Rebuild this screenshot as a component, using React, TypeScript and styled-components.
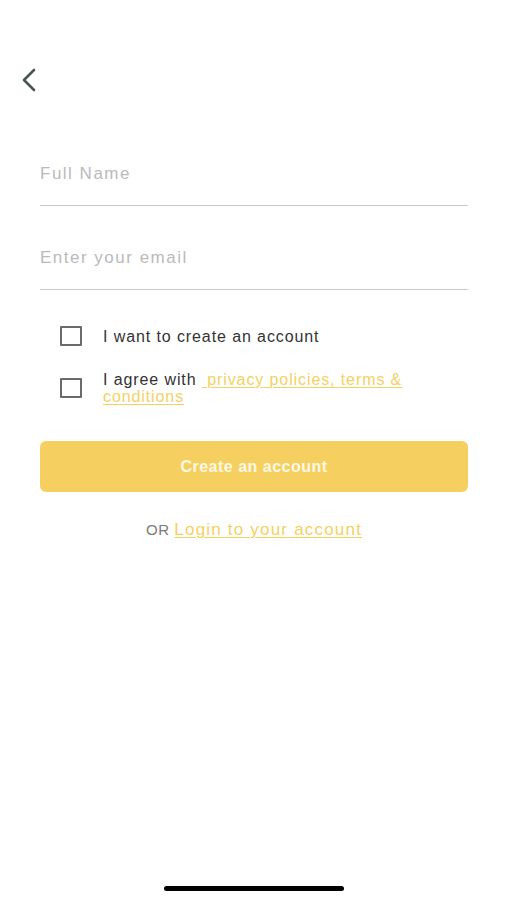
import React from 'react'
import styled, { createGlobalStyle } from 'styled-components'

const GlobalStyle = createGlobalStyle`
  html, body {
    margin: 0;
    padding: 0;
    background: #ffffff;
  }
  body {
    font-family: 'Liberation Sans', Arial, sans-serif;
  }
`

const App = () => {
  return (
    <Screen>
      <GlobalStyle />
      <TopBar>
        <BackButton aria-label="Back">
          <svg width="18" height="24" viewBox="0 0 18 24" fill="none">
            <path d="M14 2 L4 12 L14 22" stroke="#4a5457" strokeWidth="2.6" strokeLinecap="round" strokeLinejoin="round" />
          </svg>
        </BackButton>
      </TopBar>

      <Form>
        <Field>
          <Input placeholder="Full Name" />
        </Field>
        <Field>
          <Input placeholder="Enter your email" />
        </Field>

        <Checks>
          <CheckRow>
            <Box />
            <CheckLabel>I want to create an account</CheckLabel>
          </CheckRow>
          <CheckRow>
            <Box />
            <CheckLabel>
              I agree with <Link>&nbsp;privacy policies, terms &amp; conditions</Link>
            </CheckLabel>
          </CheckRow>
        </Checks>

        <PrimaryButton>Create an account</PrimaryButton>

        <OrLine>
          OR <Link $size={17}>Login to your account</Link>
        </OrLine>
      </Form>

      <Spacer />
      <HomeBar />
    </Screen>
  )
}

export default App

const Screen = styled.div`
  width: 507px;
  height: 900px;
  display: flex;
  flex-direction: column;
  background: #fff;
  overflow: hidden;
`

const TopBar = styled.div`
  height: 130px;
  padding: 68px 0 0 20px;
  box-sizing: border-box;
`

const BackButton = styled.div`
  width: 18px;
  height: 24px;
`

const Form = styled.div`
  padding: 0 39px 0 40px;
  display: flex;
  flex-direction: column;
`

const Field = styled.div`
  height: 75px;
  border-bottom: 1.5px solid #c9c9c9;
  display: flex;
  align-items: center;
  margin-bottom: 8px;
`

const Input = styled.input`
  border: none;
  outline: none;
  width: 100%;
  padding: 0;
  margin-top: 12px;
  font-family: 'Liberation Sans', Arial, sans-serif;
  font-size: 17px;
  letter-spacing: 1.5px;
  color: #333;
  background: transparent;
  &::placeholder {
    color: #bababa;
  }
`

const Checks = styled.div`
  display: flex;
  flex-direction: column;
  gap: 25px;
  padding: 28px 0 0 20px;
`

const CheckRow = styled.div`
  display: flex;
  align-items: center;
  gap: 21px;
`

const Box = styled.div`
  width: 18px;
  height: 16px;
  border: 2px solid #6a6a6a;
  border-radius: 1px;
  flex-shrink: 0;
`

const CheckLabel = styled.div`
  font-size: 16px;
  line-height: 17px;
  letter-spacing: 0.9px;
  color: #333;
  max-width: 320px;
`

const Link = styled.span<{ $size?: number }>`
  color: #f3d162;
  text-decoration: underline;
  text-decoration-thickness: 1px;
  text-underline-offset: 2px;
  ${p => (p.$size ? `font-size: ${p.$size}px; letter-spacing: 1.2px;` : '')}
`

const PrimaryButton = styled.button`
  margin-top: 36px;
  height: 51px;
  width: 100%;
  border: none;
  border-radius: 6px;
  background: #f5d060;
  color: #fff8e4;
  font-family: 'Liberation Sans', Arial, sans-serif;
  font-size: 16px;
  letter-spacing: 0.5px;
  font-weight: 700;
`

const OrLine = styled.div`
  margin-top: 28px;
  text-align: center;
  font-size: 15px;
  letter-spacing: 0.6px;
  color: #7a7a7a;
`

const Spacer = styled.div`
  flex: 1;
`

const HomeBar = styled.div`
  align-self: center;
  width: 180px;
  height: 5px;
  border-radius: 3px;
  background: #000;
  margin-bottom: 9px;
`
